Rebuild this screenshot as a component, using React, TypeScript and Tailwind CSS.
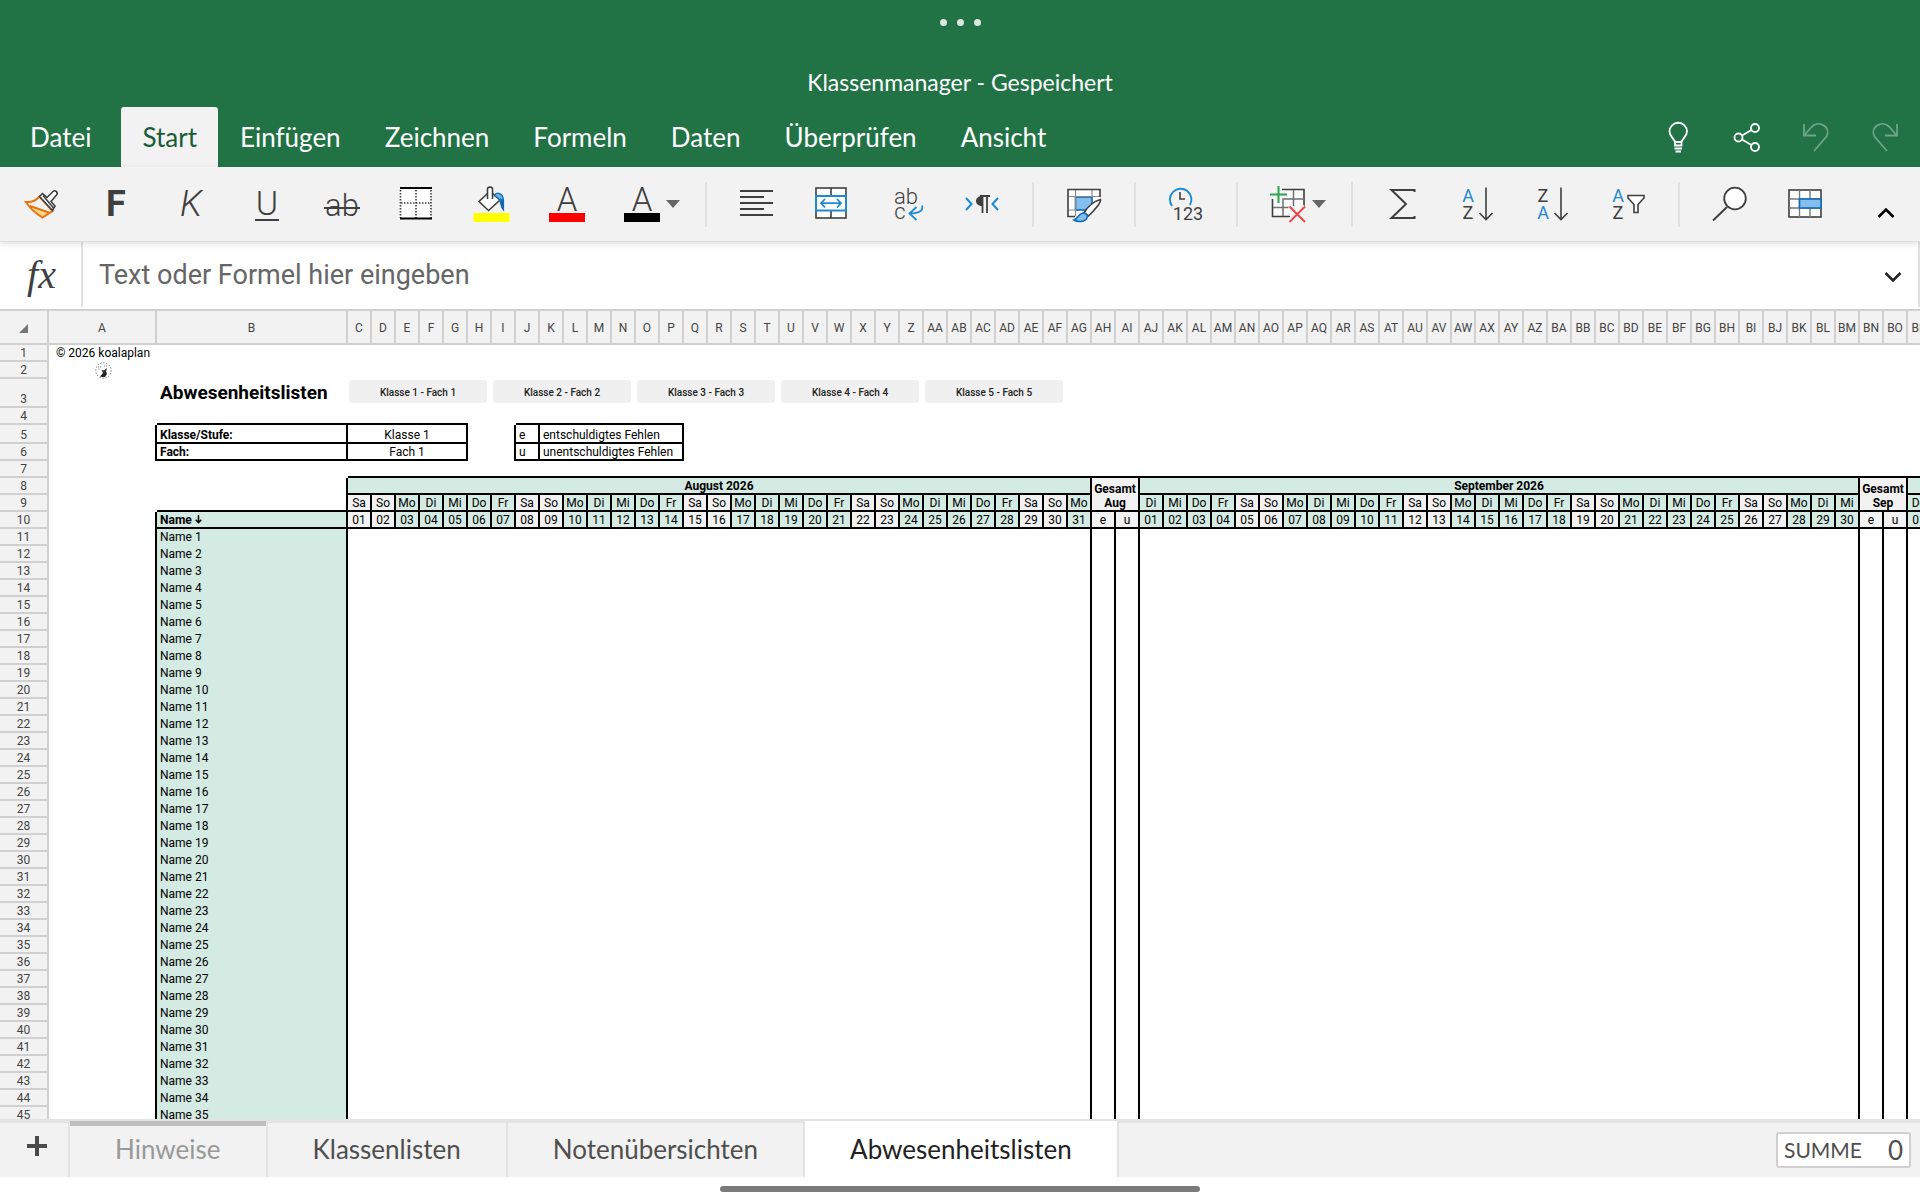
import type { ReactNode } from "react";

const INK = "#3f3f3f";
const BLUE = "#1e8ad2";
const GREEN_CELL = "bg-[#d4ebe3]";
const GRAY_CELL = "bg-[#f2f2f2]";
const B = "border-black";
const DAYS = ["So", "Mo", "Di", "Mi", "Do", "Fr", "Sa"];

const MONTHS = [
  { name: "August 2026", short: "Aug", days: 31, first: 6 },
  { name: "September 2026", short: "Sep", days: 30, first: 2 },
  { name: "Oktober 2026", short: "Okt", days: 31, first: 4 },
];

const DATE_COLUMNS = MONTHS.reduce((n, m) => n + m.days + 2, 0);

function columnName(index: number): string {
  let n = index;
  let name = "";
  while (n > 0) {
    const r = (n - 1) % 26;
    name = String.fromCharCode(65 + r) + name;
    n = Math.floor((n - 1) / 26);
  }
  return name;
}

function Icon({ children, size = 48 }: { children: ReactNode; size?: number }) {
  return (
    <svg width={size} height={size} viewBox={`0 0 ${size} ${size}`} fill="none" stroke={INK} strokeWidth="1.6" className="shrink-0" aria-hidden="true">
      {children}
    </svg>
  );
}

function Glyph({ x, y, size, color = INK, weight = 300, italic = false, children }: { x: number; y: number; size: number; color?: string; weight?: number; italic?: boolean; children: string }) {
  return (
    <text x={x} y={y} fontSize={size} fill={color} stroke="none" textAnchor="middle" fontFamily="Roboto, sans-serif" fontWeight={weight} fontStyle={italic ? "italic" : "normal"}>
      {children}
    </text>
  );
}

function Tool({ label, children }: { label: string; children: ReactNode }) {
  return (
    <button type="button" aria-label={label} className="flex h-full w-[75px] shrink-0 items-center justify-center">
      <Icon>{children}</Icon>
    </button>
  );
}

function SplitTool({ label, children }: { label: string; children: ReactNode }) {
  return (
    <button type="button" aria-label={label} className="flex h-full w-[88px] shrink-0 items-center pl-3.5">
      <Icon>{children}</Icon>
      <svg width="14" height="10" viewBox="0 0 14 10" className="shrink-0" aria-hidden="true">
        <path d="M0 1h14L7 9z" fill="#666" />
      </svg>
    </button>
  );
}

function Divider() {
  return <div className="mr-3 ml-[13px] h-[45px] w-0.5 shrink-0 bg-[#e1e1e1]" />;
}

function Toolbar() {
  return (
    <div className="relative z-10 flex h-[75px] shrink-0 items-center border-b border-[#dcdcdc] bg-[#f2f2f2] pl-1 shadow-[0_2px_6px_rgba(0,0,0,0.12)]">
      <Tool label="Format übertragen">
        <path d="M12 26L31.5 32.5 24.5 37.5z" fill="#fbd58d" stroke="none" />
        <path d="M8 22C13 22.500 18 20.500 21.500 16.500L34.500 31 24.500 37.500C18 33.500 12 28.500 8 22zM12 26L31 32.500" stroke="#e8760c" strokeWidth="2" />
        <path d="M21.500 16.500L24.500 13.500 29 17.500 35 11.500C37.500 9.500 40.500 12.500 38.500 15L33 21.500 37 26 34.500 30.500z" fill="#fff" />
        <path d="M25 15.500L35.500 28" />
      </Tool>
      <Tool label="Fett"><Glyph x={23} y={36} size={36} weight={700}>F</Glyph></Tool>
      <Tool label="Kursiv"><Glyph x={23} y={36} size={36} italic>K</Glyph></Tool>
      <Tool label="Unterstrichen">
        <Glyph x={24} y={35} size={34}>U</Glyph>
        <path d="M12 40H36" strokeWidth="2" />
      </Tool>
      <Tool label="Durchgestrichen">
        <Glyph x={24} y={36} size={31}>ab</Glyph>
        <path d="M6 28H42" strokeWidth="2" />
      </Tool>
      <Tool label="Rahmen">
        <rect x="7" y="8" width="31" height="30" fill="#fff" stroke="none" />
        <path d="M7.500 10V38M38 10V38M23 10V38M8 23H38" strokeDasharray="1.500 1.500" />
        <path d="M7 8H39M7 38.500H39" stroke="#000" strokeWidth="2" />
      </Tool>
      <Tool label="Füllfarbe">
        <path d="M19.500 13.500L11 21.500 20.500 30.500 32 20 24.500 13.500" fill="#fff" />
        <path d="M19.500 19V9C19.500 6.500 24.500 6.500 24.500 9V19" fill="#fff" />
        <path d="M26.500 15.500C28.500 11.500 35 13 35.500 20V30C32.500 27 33 23 31.500 19.500z" fill="#6cb2ea" stroke="#1068ae" strokeWidth="1.200" />
        <path d="M32 18L35.500 20V30C32.500 27 33.500 22 32 18z" fill="#1068ae" stroke="none" />
        <rect x="5.500" y="33" width="36" height="9" fill="#ffff00" stroke="none" />
      </Tool>
      <Tool label="Schriftfarbe">
        <Glyph x={24} y={31} size={33}>A</Glyph>
        <rect x="6" y="33" width="36" height="9" fill="#ff0000" stroke="none" />
      </Tool>
      <SplitTool label="Schriftfarbe automatisch">
        <Glyph x={24} y={31} size={33}>A</Glyph>
        <rect x="6" y="33" width="36" height="9" fill="#000" stroke="none" />
      </SplitTool>
      <Divider />
      <Tool label="Ausrichtung">
        <path d="M7 11H40M7 17H31M7 23H40M7 29H31M7 35H40" strokeWidth="2" />
      </Tool>
      <Tool label="Zellen verbinden">
        <rect x="8" y="8" width="30" height="30" fill="#fff" />
        <path d="M23 8V16M23 31V38" />
        <rect x="8" y="16" width="30" height="14.500" fill="#fff" stroke={BLUE} strokeWidth="2" />
        <path d="M13 23.200H33M17 19L13 23.200 17 27.500M29 19L33 23.200 29 27.500" stroke={BLUE} strokeWidth="1.800" />
      </Tool>
      <Tool label="Zeilenumbruch">
        <Glyph x={23} y={24} size={22}>ab</Glyph>
        <Glyph x={17} y={39} size={22}>c</Glyph>
        <path d="M39 25.500C41 31 35 33.500 27 33.500M33.500 27L26.500 33.500 33.500 40" stroke={BLUE} strokeWidth="1.800" />
      </Tool>
      <Tool label="Textrichtung">
        <path d="M24 16C16 16 16 26 24 26z" fill={INK} stroke="none" />
        <path d="M24.500 33V16M29 33V16M22 16H32" strokeWidth="1.800" />
        <path d="M8 18L13.500 24 8 30M40 18L34.500 24 40 30" stroke={BLUE} strokeWidth="2" />
      </Tool>
      <Divider />
      <Tool label="Zellenformatvorlagen">
        <path d="M8 10H40V18L26 36H8z" fill="#fff" stroke="none" />
        <rect x="15.500" y="17" width="16.500" height="13" fill="#83beec" stroke="#0f6cbd" />
        <path d="M8 16.500H40M8 30H16M15.500 10V36M32 10V17" stroke="#8a8a8a" strokeWidth="1.200" />
        <path d="M15 36.500H8V9.500H40V17" />
        <path d="M24 33C28 26 35 21 40.500 19.500 41.500 22 34 31 28.500 36z" fill="#fff" />
        <path d="M14 40C18 39 18 33.500 23 33 27 33 28.500 36.500 26.500 39 23.500 42.500 17 42 14 40z" fill="#83beec" stroke="#0f6cbd" />
      </Tool>
      <Divider />
      <Tool label="Zahlenformat">
        <path d="M10 26A10.800 10.800 0 1 1 28 25" stroke={BLUE} strokeWidth="1.900" />
        <path d="M18 12V19H23" />
        <Glyph x={26} y={40} size={18} weight={400}>123</Glyph>
      </Tool>
      <Divider />
      <SplitTool label="Zellen einfügen und löschen">
        <path d="M8 10H40V26L26 36H8z" fill="#fafafa" stroke="none" />
        <path d="M18 9.500H40V27M8.500 19V36.500H26" />
        <path d="M19 36V19H40M9 27.500H25M29.500 10V26" stroke="#6f6f6f" strokeWidth="1.500" />
        <path d="M14.500 6V23M6 14.500H23" stroke="#f2f2f2" strokeWidth="6" />
        <path d="M14.500 6V23M6 14.500H23" stroke="#2da44e" strokeWidth="2" />
        <path d="M25.500 26.500L41 42M41 26.500L25.500 42" stroke="#f2f2f2" strokeWidth="5" />
        <path d="M25.500 26.500L41 42M41 26.500L25.500 42" stroke="#f04040" strokeWidth="1.800" />
      </SplitTool>
      <Divider />
      <Tool label="AutoSumme">
        <path d="M35.500 12V10H12.500L27 24 12.500 38H35.500V36" strokeWidth="2" />
      </Tool>
      <Tool label="Aufsteigend sortieren">
        <Glyph x={14} y={22} size={18} color={BLUE} weight={400}>A</Glyph>
        <Glyph x={14} y={39} size={18} weight={400}>Z</Glyph>
        <path d="M32 7.500V39M25.500 33L32 39.500 38.500 33" />
      </Tool>
      <Tool label="Absteigend sortieren">
        <Glyph x={14} y={22} size={18} weight={400}>Z</Glyph>
        <Glyph x={14} y={39} size={18} color={BLUE} weight={400}>A</Glyph>
        <path d="M32 7.500V39M25.500 33L32 39.500 38.500 33" />
      </Tool>
      <Tool label="Sortieren und filtern">
        <Glyph x={14} y={22} size={18} color={BLUE} weight={400}>A</Glyph>
        <Glyph x={14} y={39} size={18} weight={400}>Z</Glyph>
        <path d="M24 15.500H40V18L34 24.500V32.500H30V24.500L24 18z" fill="#fff" />
      </Tool>
      <Divider />
      <Tool label="Suchen">
        <circle cx="29" cy="18.500" r="10.800" fill="#fff" strokeWidth="1.800" />
        <path d="M21 27L7 40.500" strokeWidth="2" />
      </Tool>
      <Tool label="Als Tabelle formatieren">
        <rect x="8" y="10" width="32" height="27" fill="#fff" />
        <path d="M8 19H40M8 28H40M18.500 10V37M29 10V37" stroke="#7a7a7a" strokeWidth="1.400" />
        <rect x="18.500" y="19" width="21.500" height="9" fill="#83beec" stroke="#0f6cbd" />
      </Tool>
      <button type="button" aria-label="Menüband reduzieren" className="mr-[25px] mb-[23px] ml-auto self-end">
        <svg width="18" height="10" viewBox="0 0 18 10" fill="none" stroke="#000" strokeWidth="2.500" aria-hidden="true">
          <path d="M1.500 9L9 1.500 16.500 9" />
        </svg>
      </button>
    </div>
  );
}

const RIBBON = ["Datei", "Start", "Einfügen", "Zeichnen", "Formeln", "Daten", "Überprüfen", "Ansicht"];

function Header() {
  return (
    <header className="flex h-[167px] shrink-0 flex-col bg-[#217346] text-white">
      <div className="flex h-11 items-center justify-center gap-2.5" aria-hidden="true">
        <span className="size-[7px] rounded-full bg-[#dbe8e0]" />
        <span className="size-[7px] rounded-full bg-[#dbe8e0]" />
        <span className="size-[7px] rounded-full bg-[#dbe8e0]" />
      </div>
      <h1 className="mt-[22px] text-center text-[23px] leading-8">Klassenmanager - Gespeichert</h1>
      <div className="mt-auto flex h-[60px]">
        <nav className="flex pl-2 text-[26px]">
          {RIBBON.map((tab) => (
            <button
              key={tab}
              type="button"
              className={tab === "Start" ? "rounded-t-[3px] bg-[#f2f2f2] px-[21px] text-[#185c37]" : tab === "Datei" ? "mr-2 px-[22px]" : "px-[22px]"}
            >
              {tab}
            </button>
          ))}
        </nav>
        <div className="mr-[15px] ml-auto flex items-center gap-[29px]">
          <button type="button" aria-label="Was möchten Sie tun?">
            <svg width="40" height="40" viewBox="0 0 40 40" fill="none" stroke="#fff" strokeWidth="1.800" aria-hidden="true">
              <path d="M17 28.500V25C16 21.500 11.500 19.500 11.500 14.500A8.700 8.700 0 0 1 29 14.500C29 19.500 24.500 21.500 23.500 25V28.500zM17 25H23.500M16.500 31.500H24M17.500 34.500H23" />
            </svg>
          </button>
          <button type="button" aria-label="Teilen">
            <svg width="40" height="40" viewBox="0 0 40 40" fill="none" stroke="#fff" strokeWidth="1.800" aria-hidden="true">
              <circle cx="11.500" cy="20.500" r="4" />
              <circle cx="28" cy="11" r="4" />
              <circle cx="28" cy="30" r="4" />
              <path d="M15 18.500L24.500 13M15 22.500L24.500 28" />
            </svg>
          </button>
          <button type="button" aria-label="Rückgängig" disabled className="opacity-35">
            <svg width="40" height="40" viewBox="0 0 40 40" fill="none" stroke="#fff" strokeWidth="1.800" aria-hidden="true">
              <path d="M8 7V18.500H20M8 18.500L15.500 10C23 2.500 35.500 10 30.500 19.500L18 34" />
            </svg>
          </button>
          <button type="button" aria-label="Wiederholen" disabled className="opacity-35">
            <svg width="40" height="40" viewBox="0 0 40 40" fill="none" stroke="#fff" strokeWidth="1.800" aria-hidden="true">
              <path d="M32 7V18.500H20M32 18.500L24.500 10C17 2.500 4.500 10 9.500 19.500L22 34" />
            </svg>
          </button>
        </div>
      </div>
    </header>
  );
}

function FormulaBar() {
  return (
    <div className="flex h-[67px] shrink-0 items-center bg-white pb-0.5">
      <div className="flex h-full w-[81px] items-center justify-center pl-0.5 font-['Liberation_Serif',serif] text-[40px] text-[#3f3f3f] italic" aria-hidden="true">
        fx
      </div>
      <input
        type="text"
        aria-label="Formel"
        placeholder="Text oder Formel hier eingeben"
        className="h-full min-w-0 flex-1 border-l-2 border-[#e1e1e1] pl-4 font-[Roboto,sans-serif] text-[27px] outline-none placeholder:text-[#666]"
      />
      <button type="button" aria-label="Bearbeitungsleiste erweitern" className="flex h-full w-[53px] items-center justify-center border-r-2 border-[#e1e1e1] pt-1">
        <svg width="18" height="10" viewBox="0 0 18 10" fill="none" stroke="#222" strokeWidth="2.500" aria-hidden="true">
          <path d="M1.500 1L9 8.500 16.500 1" />
        </svg>
      </button>
    </div>
  );
}

function RowHead({ n }: { n: number }) {
  return (
    <th scope="row" className="border-r-2 border-b-2 border-[#d0d0d0] bg-[#f2f2f2] align-bottom font-normal text-[#444]">
      {n}
    </th>
  );
}

function Koala() {
  return (
    <svg width="17" height="17" viewBox="0 0 17 17" className="mx-auto -mt-0.5 block" aria-label="koalaplan">
      <circle cx="8.500" cy="8.500" r="7.700" fill="none" stroke="#444" strokeWidth="1" strokeDasharray="1 2" />
      <path d="M5 14.500L8 11 6.500 8 9 8.500 12 6 11 9.500 12 12 10 15 7 15z" fill="#222" />
      <path d="M3 5H7M9 4H12M7.500 10H10M3.500 7H5" stroke="#777" strokeDasharray="1 1" />
    </svg>
  );
}

const weekday = (first: number, day: number) => (first + day - 1) % 7;
const isWeekend = (d: number) => d === 0 || d === 6;

function Sheet() {
  const columns = Array.from({ length: DATE_COLUMNS }, (_, i) => i + 3);
  const head = "border-r-2 border-b-2 border-[#d0d0d0] bg-[#f2f2f2] font-normal text-[#444]";
  return (
    <main className="min-h-0 flex-1 overflow-hidden border-t-2 border-[#d0d0d0] bg-white">
      <table className="w-0 table-fixed border-separate border-spacing-0 font-[Roboto,sans-serif] text-[12px] leading-[13px] whitespace-nowrap text-black [&_td]:pt-0.5 [&_td]:align-bottom [&_th]:pt-0.5">
        <colgroup>
          <col className="w-[49px]" />
          <col className="w-[108px]" />
          <col className="w-[191px]" />
          {columns.map((c) => <col key={c} className="w-6" />)}
        </colgroup>
        <thead>
          <tr className="h-[34px]">
            <th className={head}>
              <svg width="9" height="9" viewBox="0 0 9 9" className="mx-auto" aria-label="Alles markieren">
                <path d="M9 0V9H0z" fill="#777" />
              </svg>
            </th>
            <th scope="col" className={head}>A</th>
            <th scope="col" className={head}>B</th>
            {columns.map((c) => <th key={c} scope="col" className={head}>{columnName(c)}</th>)}
          </tr>
        </thead>
        <tbody>
          <tr className="h-[17px]"><RowHead n={1} /><td className="pb-0.5 text-center">© 2026 koalaplan</td></tr>
          <tr className="h-[17px]"><RowHead n={2} /><td><Koala /></td></tr>
          <tr className="h-[29px]">
            <RowHead n={3} />
            <td />
            <td className="pb-1 pl-[3px] text-[19px] leading-[23px] font-bold">Abwesenheitslisten</td>
            {[1, 2, 3, 4, 5].map((k) => (
              <td key={k} colSpan={6} className="pt-0! pr-[5px] pb-[5px] pl-px">
                <button type="button" className="block h-[23px] w-full rounded-[4px] bg-[#f0f0f0] pt-0.5 text-[10px] font-medium text-[#222]">
                  Klasse {k} - Fach {k}
                </button>
              </td>
            ))}
          </tr>
          <tr className="h-[17px]">
            <RowHead n={4} />
            <td />
            <td className={`border-b-2 ${B}`} />
            <td colSpan={5} className={`border-b-2 ${B}`} />
            <td colSpan={2} />
            <td colSpan={7} className={`border-b-2 ${B}`} />
          </tr>
          {[
            { n: 5, label: "Klasse/Stufe:", value: "Klasse 1", key: "e", text: "entschuldigtes Fehlen" },
            { n: 6, label: "Fach:", value: "Fach 1", key: "u", text: "unentschuldigtes Fehlen" },
          ].map((r) => (
            <tr key={r.n} className={r.n === 5 ? "h-[19px]" : "h-[17px]"}>
              <RowHead n={r.n} />
              <td className={`border-r-2 ${B}`} />
              <td className={`border-r-2 border-b-2 pl-[3px] font-bold ${B}`}>{r.label}</td>
              <td colSpan={5} className={`border-r-2 border-b-2 text-center ${B}`}>{r.value}</td>
              <td colSpan={2} className={`border-r-2 ${B}`} />
              <td className={`border-r-2 border-b-2 pl-[3px] ${B}`}>{r.key}</td>
              <td colSpan={6} className={`border-r-2 border-b-2 pl-[3px] ${B}`}>{r.text}</td>
            </tr>
          ))}
          <tr className="h-[17px]">
            <RowHead n={7} />
            <td />
            <td />
            <td colSpan={DATE_COLUMNS} className={`border-b-2 ${B}`} />
          </tr>
          <tr className="h-[17px]">
            <RowHead n={8} />
            <td />
            <td className={`border-r-2 ${B}`} />
            {MONTHS.flatMap((m) => [
              <td key={m.name} colSpan={m.days} className={`border-r-2 border-b-2 text-center font-bold ${B} ${GREEN_CELL}`}>{m.name}</td>,
              <td key={m.short} colSpan={2} rowSpan={2} className={`border-r-2 border-b-2 text-center leading-[14px] font-bold ${B} ${GRAY_CELL}`}>
                Gesamt<br />{m.short}
              </td>,
            ])}
          </tr>
          <tr className="h-[17px]">
            <RowHead n={9} />
            <td />
            <td className={`border-r-2 border-b-2 ${B}`} />
            {MONTHS.flatMap((m) =>
              Array.from({ length: m.days }, (_, i) => {
                const d = weekday(m.first, i + 1);
                return (
                  <td key={m.short + i} className={`border-r-2 border-b-2 text-center ${B} ${isWeekend(d) ? GRAY_CELL : GREEN_CELL}`}>{DAYS[d]}</td>
                );
              }),
            )}
          </tr>
          <tr className="h-[17px]">
            <RowHead n={10} />
            <td className={`border-r-2 ${B}`} />
            <td className={`border-r-2 border-b-2 pl-[3px] font-bold ${B} ${GREEN_CELL}`}>
              Name <svg width="7" height="9" viewBox="0 0 7 9" fill="none" stroke="#000" strokeWidth="1.500" className="inline-block align-baseline" aria-hidden="true"><path d="M3.500 0V7.500M0.700 4.800L3.500 7.600 6.300 4.800" /></svg>
            </td>
            {MONTHS.flatMap((m) => [
              ...Array.from({ length: m.days }, (_, i) => (
                <td key={m.short + i} className={`border-r-2 border-b-2 text-center ${B} ${isWeekend(weekday(m.first, i + 1)) ? GRAY_CELL : GREEN_CELL}`}>
                  {String(i + 1).padStart(2, "0")}
                </td>
              )),
              <td key={`${m.short}e`} className={`border-r-2 border-b-2 text-center ${B} ${GRAY_CELL}`}>e</td>,
              <td key={`${m.short}u`} className={`border-r-2 border-b-2 text-center ${B} ${GRAY_CELL}`}>u</td>,
            ])}
          </tr>
          {Array.from({ length: 35 }, (_, r) => (
            <tr key={r} className="h-[17px]">
              <RowHead n={r + 11} />
              <td className={`border-r-2 ${B}`} />
              <td className={`border-r-2 pb-0.5 pl-[3px] ${B} ${GREEN_CELL}`}>Name {r + 1}</td>
              {MONTHS.flatMap((m) => [
                <td key={m.name} colSpan={m.days} className={`border-r-2 ${B}`} />,
                <td key={`${m.short}e`} className={`border-r-2 ${B}`} />,
                <td key={`${m.short}u`} className={`border-r-2 ${B}`} />,
              ])}
            </tr>
          ))}
        </tbody>
      </table>
    </main>
  );
}

const SHEETS = ["Hinweise", "Klassenlisten", "Notenübersichten", "Abwesenheitslisten"];

function SheetTabs() {
  return (
    <footer className="shrink-0 bg-white">
      <div className="flex h-[58px] bg-[#f2f2f2] text-[26px] text-[#4f4f4f]">
        <button type="button" aria-label="Neues Blatt" className="flex w-[70px] items-center justify-center border-t-4 border-r-2 border-t-[#e3e3e3] border-r-[#e3e3e3] pb-2 pl-1.5">
          <svg width="20" height="20" viewBox="0 0 20 20" fill="none" stroke="#4a4a4a" strokeWidth="4" aria-hidden="true">
            <path d="M10 0V20M0 10H20" />
          </svg>
        </button>
        {SHEETS.map((name, i) => (
          <div key={name} className={`flex flex-col border-r-2 border-[#e3e3e3] ${i === 3 ? "bg-white" : ""}`}>
            <div className={i === 3 ? "h-0.5 bg-[#e3e3e3]" : i === 0 ? "h-[7px] border-t-2 border-[#e3e3e3] bg-[#bfbfbf]" : "h-1 bg-[#e3e3e3]"} />
            <button type="button" className={`flex-1 px-[45px] pb-0.5 ${i === 0 ? "-mt-[3px] text-[#999]" : i === 3 ? "mt-0.5 text-[#222]" : ""}`}>{name}</button>
          </div>
        ))}
        <div className="flex flex-1 items-center justify-end border-t-4 border-[#e3e3e3] pr-[9px]">
          <button type="button" className="flex h-9 w-[135px] items-center justify-between rounded-[3px] border-2 border-[#d0d0d0] bg-white px-1.5">
            <span className="text-[21px]">SUMME</span>
            <span>0</span>
          </button>
        </div>
      </div>
      <div className="flex h-[23px] items-center justify-center">
        <div className="h-1.5 w-1/4 rounded-full bg-[#7b7b7b]" />
      </div>
    </footer>
  );
}

export default function App() {
  return (
    <div className="flex h-screen flex-col overflow-hidden bg-white font-[Lato,sans-serif]">
      <Header />
      <Toolbar />
      <FormulaBar />
      <Sheet />
      <SheetTabs />
    </div>
  );
}
